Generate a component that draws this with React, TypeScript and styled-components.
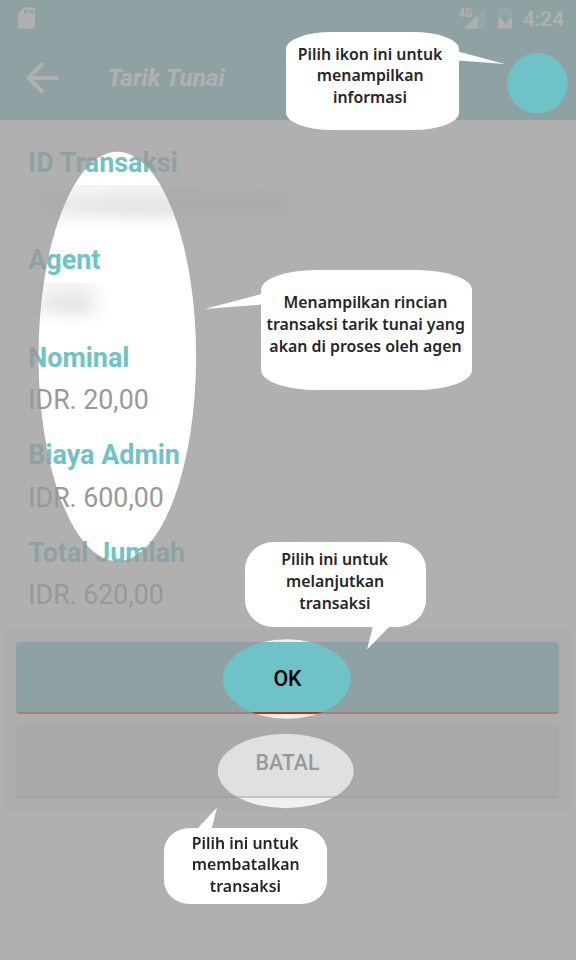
import React from "react";
import styled, { createGlobalStyle } from "styled-components";

const GlobalStyle = createGlobalStyle`
  body { margin: 0; background: #fafafa; }
  * { box-sizing: border-box; }
`;

const Screen = styled.main`
  position: relative;
  display: flex;
  flex-direction: column;
  width: 576px;
  height: 960px;
  overflow: hidden;
  background: #fcfcfc;
  font-family: Roboto, sans-serif;
`;

const Header = styled.header`
  flex: none;
  display: flex;
  flex-direction: column;
  height: 119.5px;
  background: #6fc3c7;
  color: #fff;
`;

const StatusBar = styled.div`
  flex: none;
  display: flex;
  align-items: center;
  justify-content: space-between;
  height: 35px;
  padding: 0 12px 0 18px;
`;

const StatusIcons = styled.div`
  display: flex;
  align-items: center;
`;

const Clock = styled.span`
  margin-left: 10px;
  padding-top: 3px;
  font-size: 20.8px;
  font-weight: 500;
  line-height: 35px;
`;

const Toolbar = styled.div`
  flex: none;
  display: flex;
  align-items: center;
  height: 84px;
  padding: 2px 0 0 26px;
`;

const Title = styled.h1`
  margin: 0 0 0 49.5px;
  font-size: 24.3px;
  font-style: italic;
  font-weight: 700;
  line-height: 32px;
`;

const Details = styled.section`
  flex: none;
  display: flex;
  flex-direction: column;
  height: 509.5px;
  margin: 0 5px 0 4px;
  padding: 27px 24px 0 24.3px;
  background: #fff;
`;

const Field = styled.div`
  flex: none;
  display: flex;
  flex-direction: column;
  gap: 10.6px;
  height: 97.5px;
`;

const Label = styled.div`
  color: #6fc3c7;
  font-size: 26.9px;
  font-weight: 700;
  line-height: 32px;
  white-space: nowrap;
`;

const Value = styled.div`
  color: #999;
  font-size: 26.75px;
  line-height: 32px;
  white-space: nowrap;
`;

const Redacted = styled.div<{ $w: number; $h: number }>`
  display: flex;
  justify-content: center;
  width: ${(p) => p.$w}px;
  height: ${(p) => p.$h}px;
  margin-left: -6px;
  margin-top: -4px;
  padding-top: 11px;
  overflow: hidden;
  background: linear-gradient(90deg, #fff0 60%, #fff 100%), linear-gradient(#f4f8f8, #fff 40%);
`;

const Smudge = styled.div<{ $w: number; $h: number; $peak: number }>`
  width: ${(p) => p.$w}px;
  height: ${(p) => p.$h}px;
  border-radius: 10px;
  background: linear-gradient(90deg, #e8e8e8, #dadada ${(p) => p.$peak}%, #e0e0e0);
  filter: blur(9px);
`;

const Actions = styled.section`
  flex: none;
  display: flex;
  flex-direction: column;
  gap: 12px;
  height: 180.5px;
  margin: 0 5px 0 4px;
  padding: 13px 12px 0;
  background: #f1f1f1;
`;

const ActionButton = styled.button<{ $bg: string; $edge: string; $ink: string }>`
  height: 72px;
  padding: 4px 0 0;
  border: 0;
  border-bottom: 2px solid ${(p) => p.$edge};
  border-radius: 4px;
  background: ${(p) => p.$bg};
  background-clip: padding-box;
  color: ${(p) => p.$ink};
  font: 500 21.3px/32px Roboto, sans-serif;
`;

const Shade = styled.svg`
  position: absolute;
  inset: 0;
`;

const Callout = styled.div<{ $x: number; $y: number; $w: number; $h: number; $r: string; $pad: number }>`
  position: absolute;
  left: ${(p) => p.$x}px;
  top: ${(p) => p.$y}px;
  width: ${(p) => p.$w}px;
  height: ${(p) => p.$h}px;
  display: flex;
  flex-direction: column;
  align-items: center;
  padding-top: ${(p) => p.$pad}px;
  border-radius: ${(p) => p.$r};
  background: #fff;
`;

const CalloutLine = styled.span<{ $dx?: number }>`
  color: #262626;
  font-family: "Noto Sans", "Open Sans", sans-serif;
  font-size: 16.7px;
  font-weight: 600;
  line-height: 21.7px;
  white-space: nowrap;
  transform: translateX(${(p) => p.$dx ?? 0}px) scaleX(0.95);
`;

const SdCard = () => (
  <svg width="18" height="22" viewBox="0 0 18 22">
    <path fill="#fff" fillRule="evenodd" d="M6 .5H15.5Q17 .5 17 2V20Q17 21.5 15.5 21.5H1.5Q0 21.5 0 20V6.500ZM6 2.700V6.500H8V2.700ZM9.500 2.700V6.500H11.500V2.700ZM13 2.700V6.500H15V2.700Z" />
  </svg>
);

const SignalIcon = styled.svg`
  overflow: visible;
`;

const Signal = () => (
  <SignalIcon width="28" height="22" viewBox="0 0 28 22">
    <path fill="#fff" fillOpacity=".3" d="M27 0V21.5H5.5Z" />
    <path fill="#fff" d="M18.5 8.5V21.5H5.5Z" />
    <path fill="#6fc3c7" d="M0 0H14V11H0Z" />
    <text x="0" y="10" fill="#fff" fontFamily="Roboto" fontSize="12.2" fontWeight="700" textLength="13" lengthAdjust="spacingAndGlyphs">4G</text>
  </SignalIcon>
);

const Battery = () => (
  <svg width="15" height="22" viewBox="0 0 15 22">
    <path fill="#fff" fillOpacity=".3" d="M4 2.5V0H10.5V2.5H14V11.5H0V2.5Z" />
    <path fill="#fff" d="M0 11.5H14V21.5H0Z" />
    <path fill="#6fc3c7" d="M8.5 5L3 13.5H6.5V19L12 10.5H8.5Z" />
  </svg>
);

const Gap = styled.span`
  width: 11px;
`;

const Back = () => (
  <svg width="32" height="32" viewBox="0 0 32 32" fill="none" stroke="#fff" strokeWidth="4">
    <path d="M17 1.5L2.5 16L17 30.5M3 16H32" />
  </svg>
);

const amounts = [
  ["Nominal", "IDR. 20,00"],
  ["Biaya Admin", "IDR. 600,00"],
  ["Total Jumlah", "IDR. 620,00"],
];

const callouts = [
  { x: 285.5, y: 31.7, w: 173.3, h: 98.3, r: "46px / 17px", pad: 10.9, lines: ["Pilih ikon ini untuk", "menampilkan", "informasi"], dx: -2 },
  { x: 260.5, y: 269.5, w: 211, h: 120, r: "56px / 20px", pad: 21.6, lines: ["Menampilkan rincian", "transaksi tarik tunai yang", "akan di proses oleh agen"], dx: -0.7 },
  { x: 245, y: 541.5, w: 181, h: 85.2, r: "29px / 27px", pad: 6.6, lines: ["Pilih ini untuk", "melanjutkan", "transaksi"], dx: -0.5 },
  { x: 164, y: 827.7, w: 162.5, h: 76.8, r: "26px / 23px", pad: 4.1, lines: ["Pilih ini untuk", "membatalkan", "transaksi"], dx: 0 },
];

export default function App() {
  return (
    <>
      <GlobalStyle />
      <Screen>
        <Header>
          <StatusBar>
            <SdCard />
            <StatusIcons>
              <Signal />
              <Gap />
              <Battery />
              <Clock>4:24</Clock>
            </StatusIcons>
          </StatusBar>
          <Toolbar>
            <Back />
            <Title>Tarik Tunai</Title>
          </Toolbar>
        </Header>
        <Details>
          <Field>
            <Label>ID Transaksi</Label>
            <Redacted $w={284} $h={44}><Smudge $w={254} $h={18} $peak={35} /></Redacted>
          </Field>
          <Field>
            <Label>Agent</Label>
            <Redacted $w={86} $h={42}><Smudge $w={62} $h={18} $peak={75} /></Redacted>
          </Field>
          {amounts.map(([label, value]) => (
            <Field key={label}>
              <Label>{label}</Label>
              <Value>{value}</Value>
            </Field>
          ))}
        </Details>
        <Actions>
          <ActionButton $bg="#6fc3c7" $edge="#d02a00" $ink="#000">OK</ActionButton>
          <ActionButton $bg="#e0e0e0" $edge="#c2c2c2" $ink="#999">BATAL</ActionButton>
        </Actions>

        <Shade width="576" height="960" viewBox="0 0 576 960">
          <mask id="spotlights">
            <rect width="576" height="960" fill="#fff" />
            <circle cx="537.5" cy="83.3" r="30.2" />
            <ellipse cx="117.3" cy="356.5" rx="78.8" ry="204.7" />
            <ellipse cx="286.8" cy="679" rx="64" ry="39.7" />
            <ellipse cx="285.7" cy="771" rx="68" ry="37.2" />
          </mask>
          <rect width="576" height="960" fill="#989898" fillOpacity=".77" mask="url(#spotlights)" />
          <g fill="#fff">
            <path d="M458 51.5L505 64L458 60.5Z" />
            <path d="M262 293.8L204.5 309L262 304.5Z" />
            <path d="M373 626L367 649.5L390 626Z" />
            <path d="M197 829L217 807.5L211.5 829Z" />
          </g>
        </Shade>
        {callouts.map((c) => (
          <Callout key={c.y} $x={c.x} $y={c.y} $w={c.w} $h={c.h} $r={c.r} $pad={c.pad}>
            {c.lines.map((line) => (
              <CalloutLine key={line} $dx={c.dx}>{line}</CalloutLine>
            ))}
          </Callout>
        ))}
      </Screen>
    </>
  );
}
